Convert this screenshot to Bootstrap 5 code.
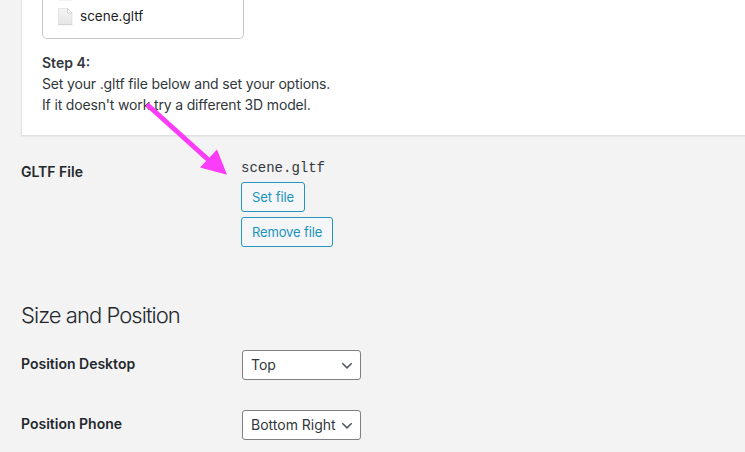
<!DOCTYPE html>
<html lang="en">
<head>
<meta charset="utf-8">
<meta name="viewport" content="width=device-width, initial-scale=1">
<title>GLTF options</title>
<link href="https://cdn.jsdelivr.net/npm/bootstrap@5.3.0/dist/css/bootstrap.min.css" rel="stylesheet">
<style>
body{background:#f3f3f3;font-family:Inter,"Liberation Sans",sans-serif;font-size:14px;line-height:21px;color:#32373c;height:452px}
.guide{margin-left:21px;height:136px;padding-left:20px;background:#fff;border:1px solid #dfe0e2;border-width:0 0 1px 1px;box-shadow:0 1px 1px rgba(0,0,0,.04)}
.files{width:202px;height:39px;border:1px solid #c6c6c8;border-top:0;border-radius:0 0 5px 5px;padding:6px 0 0 14px;font-size:13.5px;color:#1d1d1f}
.files svg{flex:none;margin-top:-6px}
.file-label{margin-left:7px}
.steps{padding-top:13px;letter-spacing:-.16px}
.step-title{letter-spacing:0}
.setting{padding-left:21px}
.setting-name{width:220px;color:#23282d;font-weight:600;flex:none;padding-top:3px}
.file-name{font-family:"Liberation Mono",monospace;font-size:14px;line-height:18px}
.btn-file{--bs-btn-color:#1a93bd;--bs-btn-border-color:#2494bb;--bs-btn-bg:#f5f6f7;--bs-btn-font-size:13px;--bs-btn-line-height:28px;--bs-btn-padding-y:0;--bs-btn-padding-x:10px;--bs-btn-border-radius:3px;height:30px;white-space:nowrap;letter-spacing:-.14px}
.gltf-name{padding-top:25px}
.gltf-controls{padding-top:23px}
.set-file{margin-top:5px;margin-bottom:5px;letter-spacing:-.05px;width:64px}
.title-line{margin:54px 0 21px;font-size:22px;font-weight:300;line-height:28px;color:#23282d;letter-spacing:-.95px;padding-left:21px}
.second{margin-top:30px}
.form-select.choice{width:119px;height:30px;margin-left:1px;padding:0 20px 0 8px;font-size:14px;line-height:28px;color:#32373c;border:1px solid #7e8084;border-radius:3px;background-color:#fff;background-image:none}
.chev{right:8px;top:10px}
.pointer{left:140px;top:95px}
</style>
</head>
<body class="overflow-hidden position-relative">
<section class="guide overflow-hidden">
  <div class="files d-flex">
    <svg width="16" height="29" viewBox="0 0 16 29"><defs><linearGradient id="paper" x2="0" y2="1"><stop stop-color="#f4f4f4"/><stop offset="1" stop-color="#e6e6e6"/></linearGradient></defs><path d="M1.500 0h13v.5h-13z" fill="#e4e4e4"/><path d="M1.500 8.500h9l4.500 4.500v11.500H1.500z" fill="url(#paper)" stroke="#dcdcdc" stroke-width=".7"/><path d="M10.500 8.500V13H15z" fill="#fff" stroke="#c6c6c6" stroke-width=".7"/><path d="M1.300 24.700h14" stroke="#c9c9c9" stroke-width=".7"/></svg>
    <span class="file-label">scene.gltf</span>
  </div>
  <div class="steps">
    <div class="step-title fw-semibold">Step 4:</div>
    <div>Set your .gltf file below and set your options.</div>
    <div>If it doesn't work try a different 3D model.</div>
  </div>
</section>

<section class="setting d-flex align-items-start">
  <div class="setting-name gltf-name">GLTF File</div>
  <div class="gltf-controls d-flex flex-column align-items-start">
    <span class="file-name">scene.gltf</span>
    <button type="button" class="btn btn-file set-file">Set file</button>
    <button type="button" class="btn btn-file remove-file">Remove file</button>
  </div>
</section>

<h2 class="title-line">Size and Position</h2>

<div class="setting d-flex">
  <label class="setting-name" for="desk">Position Desktop</label>
  <div class="position-relative">
    <select id="desk" class="form-select choice"><option>Top</option></select>
    <svg class="chev position-absolute pe-none" width="12" height="11" viewBox="0 0 12 11" fill="none" stroke="#50555b" stroke-width="1.500"><path d="M1.300 3.200 6 7.900l4.700-4.700"/></svg>
  </div>
</div>
<div class="setting second d-flex">
  <label class="setting-name" for="phone">Position Phone</label>
  <div class="position-relative">
    <select id="phone" class="form-select choice"><option>Bottom Right</option></select>
    <svg class="chev position-absolute pe-none" width="12" height="11" viewBox="0 0 12 11" fill="none" stroke="#50555b" stroke-width="1.500"><path d="M1.300 3.200 6 7.900l4.700-4.700"/></svg>
  </div>
</div>

<svg class="pointer position-absolute pe-none" width="95" height="85" viewBox="140 95 95 85"><path d="M147 104.500 208 159.500" stroke="#fb3cf8" stroke-width="5"/><path d="M227 174.800 217 149.500 200 167.500z" fill="#fb3cf8"/></svg>
<script src="https://cdn.jsdelivr.net/npm/bootstrap@5.3.0/dist/js/bootstrap.bundle.min.js"></script>
</body>
</html>
